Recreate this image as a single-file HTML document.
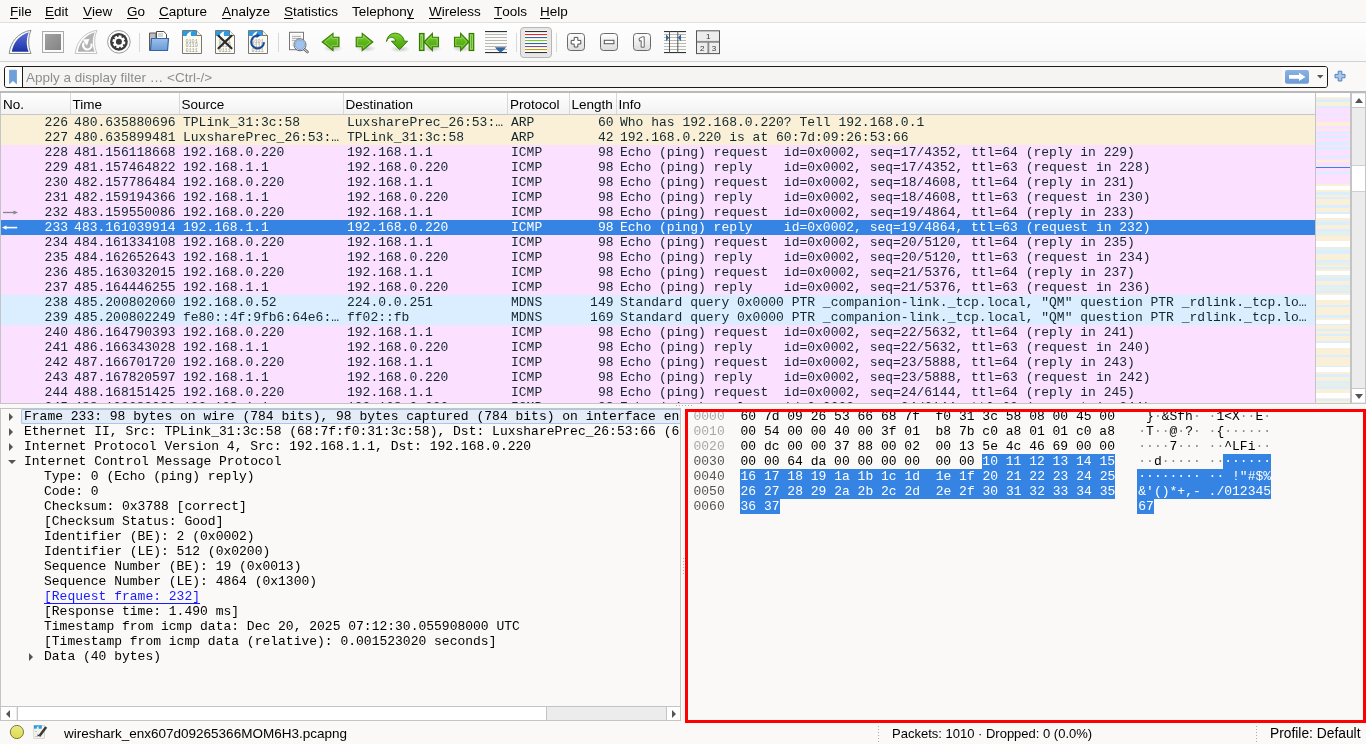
<!DOCTYPE html>
<html><head><meta charset="utf-8"><title>Wireshark</title>
<style>
*{margin:0;padding:0;box-sizing:border-box}
html,body{width:1366px;height:744px;overflow:hidden}
body{will-change:transform;position:relative;background:#faf9f8;font-family:"Liberation Sans",sans-serif;font-size:13.5px;color:#000}
.a{position:absolute}
/* menubar */
#menubar{left:0;top:0;width:1366px;height:22px;background:#f9f8f7}
#menubar span{position:absolute;top:4px;line-height:16px;white-space:nowrap;color:#000}
#menubar u{text-decoration:none;border-bottom:1px solid #000;display:inline-block;line-height:13px}
#mline{left:0;top:22px;width:1366px;height:1px;background:#e0dfde}
/* toolbar */
#toolbar{left:0;top:23px;width:1366px;height:38px;background:linear-gradient(#fefefe,#f8f8f8)}
#tline{left:0;top:61px;width:1366px;height:1px;background:#d2d1d0}
.sep{position:absolute;top:31px;width:1px;height:22px;background:#d8d7d6}
/* filter */
#filter{left:4px;top:66px;width:1324px;height:22px;border:1px solid #1b1b1b;border-radius:3px;background:#f5f4f3;overflow:hidden}
#fbm{left:0;top:0;width:18px;height:20px;background:#fff;border-right:1px solid #1b1b1b}
#fph{left:21px;top:2.5px;line-height:16px;color:#8b8e8f;white-space:nowrap}
/* packet list */
#plist{left:0;top:91px;width:1316px;height:313px;background:#fff;overflow:hidden;border-left:1px solid #c4c4c4;border-top:2px solid #c4c4c4}
#phdr{left:1px;top:93px;width:1315px;height:22px;background:linear-gradient(#fff,#f2f2f2);border-bottom:1px solid #c8c8c8}
.hs{position:absolute;top:93px;width:1px;height:21px;background:#d8d8d8}
.ht{position:absolute;top:97px;line-height:16px;white-space:nowrap;color:#000}
.pr{position:absolute;left:-1px;width:1316px;height:15px;color:#12272e;font-family:"Liberation Mono",monospace;font-size:13px;line-height:15px}
.pr .c{position:absolute;top:0;white-space:pre}
.pr.arp{background:#faf0d7}
.pr.icmp{background:#fce0ff}
.pr.udp{background:#daeeff}
.pr.sel{background:#3584e4;color:#fff}
#pclip{left:1px;top:115px;width:1314px;height:288px;overflow:hidden}
#ptop{left:0;top:91px;width:1366px;height:2px;background:#bababa}
#pbottom{left:0;top:403px;width:1366px;height:1px;background:#c4c4c4}
.vdots{position:absolute;height:1px;background:repeating-linear-gradient(to right,#b0b0b0 0 1px,transparent 1px 3px)}
/* minimap + scrollbar */
#mmap{left:1315px;top:93px;width:37px;height:310px;border-left:1px solid #c4c4c4;border-right:2px solid #c4c4c4;background:linear-gradient(to bottom,#ffffff -0.3px 4.0px,#faf0d7 4.0px 5.8px,#daeeff 5.8px 9.0px,#faf0d7 9.0px 13.0px,#daeeff 13.0px 15.0px,#fce0ff 15.0px 21.2px,#daeeff 21.2px 22.3px,#fce0ff 22.3px 28.7px,#faf0d7 28.7px 33.0px,#fce0ff 33.0px 36.0px,#faf0d7 36.0px 37.3px,#fce0ff 37.3px 39.3px,#daeeff 39.3px 41.0px,#fce0ff 41.0px 43.2px,#daeeff 43.2px 44.8px,#fce0ff 44.8px 49.2px,#daeeff 49.2px 51.8px,#fce0ff 51.8px 54.0px,#daeeff 54.0px 56.7px,#fce0ff 56.7px 63.1px,#daeeff 63.1px 65.3px,#fce0ff 65.3px 67.0px,#faf0d7 67.0px 69.0px,#fce0ff 69.0px 73.6px,#3584e4 73.6px 74.7px,#fce0ff 74.7px 79.0px,#daeeff 79.0px 81.1px,#fce0ff 81.1px 90.8px,#faf0d7 90.8px 93.0px,#ffffff 93.0px 97.3px,#faf0d7 97.3px 98.9px,#daeeff 98.9px 102.1px,#faf0d7 102.1px 104.0px,#daeeff 104.0px 105.9px,#faf0d7 105.9px 112.0px,#daeeff 112.0px 114.8px,#faf0d7 114.8px 118.8px,#daeeff 118.8px 120.9px,#ffffff 120.9px 125.2px,#faf0d7 125.2px 127.4px,#e6efe9 127.4px 129.5px,#daeeff 129.5px 131.7px,#faf0d7 131.7px 136.5px,#daeeff 136.5px 138.7px,#e6efe9 138.7px 143.5px,#faf0d7 143.5px 147.8px,#ffffff 147.8px 153.6px,#e6efe9 153.6px 156.8px,#daeeff 156.8px 161.1px,#faf0d7 161.1px 167.0px,#daeeff 167.0px 169.2px,#e6efe9 169.2px 172.4px,#faf0d7 172.4px 174.0px,#daeeff 174.0px 176.2px,#faf0d7 176.2px 177.8px,#ffffff 177.8px 182.1px,#e6efe9 182.1px 184.8px,#daeeff 184.8px 188.0px,#faf0d7 188.0px 191.8px,#daeeff 191.8px 194.5px,#e6efe9 194.5px 197.7px,#daeeff 197.7px 199.8px,#faf0d7 199.8px 202.0px,#ffffff 202.0px 206.8px,#faf0d7 206.8px 212.2px,#daeeff 212.2px 213.8px,#faf0d7 213.8px 221.9px,#daeeff 221.9px 225.1px,#faf0d7 225.1px 226.7px,#ffffff 226.7px 231.0px,#daeeff 231.0px 232.0px,#faf0d7 232.0px 235.8px,#daeeff 235.8px 237.9px,#faf0d7 237.9px 241.1px,#daeeff 241.1px 243.3px,#faf0d7 243.3px 248.1px,#daeeff 248.1px 250.3px,#ffffff 250.3px 255.1px,#faf0d7 255.1px 261.6px,#daeeff 261.6px 264.3px,#faf0d7 264.3px 272.9px,#daeeff 272.9px 274.5px,#ffffff 274.5px 279.3px,#faf0d7 279.3px 280.9px,#daeeff 280.9px 284.2px,#faf0d7 284.2px 288.0px,#daeeff 288.0px 290.0px,#e6efe9 290.0px 294.4px,#daeeff 294.4px 296.5px,#faf0d7 296.5px 299.7px,#ffffff 299.7px 304.6px,#faf0d7 304.6px 306.2px,#daeeff 306.2px 307.8px,#faf0d7 307.8px 310.0px)}
#vscroll{left:1352px;top:93px;width:14px;height:310px;background:#ececec;border-right:1.5px solid #c4c4c4}
.sbtn{position:absolute;background:#fff}
.up{width:0;height:0;border-left:4.5px solid transparent;border-right:4.5px solid transparent;border-bottom:5px solid #555;position:absolute}
.dn{width:0;height:0;border-left:4.5px solid transparent;border-right:4.5px solid transparent;border-top:5px solid #555;position:absolute}
.lf{width:0;height:0;border-top:4px solid transparent;border-bottom:4px solid transparent;border-right:4.5px solid #555;position:absolute}
.rt{width:0;height:0;border-top:4px solid transparent;border-bottom:4px solid transparent;border-left:4.5px solid #555;position:absolute}
/* details */
#details{left:0;top:408px;width:681px;height:313px;background:#faf9f8;border:1px solid #c4c4c4;border-right:1px solid #c4c4c4;overflow:hidden}
.t{position:absolute;font-family:"Liberation Mono",monospace;font-size:13px;line-height:15px;white-space:pre;color:#000}
.t.link{color:#1a1aff;text-decoration:underline;text-decoration-skip-ink:none;text-underline-offset:2.5px}
.hl{position:absolute;left:20px;width:662px;height:15px;border-radius:2px;background:#e3ecf7;border:1px solid #a9c7ea;border-right:none}
.tri-r{position:absolute;width:0;height:0;border-top:4px solid transparent;border-bottom:4px solid transparent;border-left:4px solid #555}
.tri-d{position:absolute;width:0;height:0;border-left:4px solid transparent;border-right:4px solid transparent;border-top:4px solid #555}
#dclip{left:1px;top:409px;width:679px;height:297px;overflow:hidden}
#hscroll{left:1px;top:706px;width:679px;height:14px;background:#ececec;border-top:1px solid #c4c4c4}
/* hex */
#hex{left:685px;top:409px;width:681px;height:314px;background:#faf9f8;overflow:hidden}
#redbox{left:685px;top:409px;width:681px;height:314px;border:3px solid #ff0000}
.hx{position:absolute;font-family:"Liberation Mono",monospace;font-size:13px;line-height:15px;white-space:pre;color:#000}
.off1{color:#a8a8a8}
.off2{color:#555}
.hsel{position:absolute;background:#3584e4;height:15px}
.dot{color:#888}
.w{color:#fff}
/* status */
#status{left:0;top:723px;width:1366px;height:21px;background:#faf9f8}
.st{position:absolute;top:2px;line-height:17px;white-space:nowrap;color:#000}
.sdots{position:absolute;top:3px;width:1px;height:18px;background:repeating-linear-gradient(#aaa 0 1px,transparent 1px 3px)}

</style></head><body>
<div id="menubar" class="a">
<span style="left:10px"><u>F</u>ile</span>
<span style="left:45px"><u>E</u>dit</span>
<span style="left:83px"><u>V</u>iew</span>
<span style="left:127px"><u>G</u>o</span>
<span style="left:159px"><u>C</u>apture</span>
<span style="left:222px"><u>A</u>nalyze</span>
<span style="left:284px"><u>S</u>tatistics</span>
<span style="left:352px">Telephon<u>y</u></span>
<span style="left:429px"><u>W</u>ireless</span>
<span style="left:494px"><u>T</u>ools</span>
<span style="left:540px"><u>H</u>elp</span>
</div>
<div id="mline" class="a"></div>
<div id="toolbar" class="a"></div>
<div id="tline" class="a"></div>
<svg class="a" style="left:0;top:0" width="740" height="62" viewBox="0 0 740 62">
<defs>
<linearGradient id="gfin" x1="0" y1="0" x2="0" y2="1"><stop offset="0" stop-color="#5a70d8"/><stop offset="1" stop-color="#1c33a6"/></linearGradient>
<linearGradient id="ggrey" x1="0" y1="0" x2="1" y2="1"><stop offset="0" stop-color="#a2a2a2"/><stop offset="1" stop-color="#838383"/></linearGradient>
<linearGradient id="ggreen" x1="0" y1="0" x2="0" y2="1"><stop offset="0" stop-color="#7fd23a"/><stop offset=".5" stop-color="#5cb51a"/><stop offset="1" stop-color="#4aa20a"/></linearGradient>
<linearGradient id="gbtn" x1="0" y1="0" x2="0" y2="1"><stop offset="0" stop-color="#ffffff"/><stop offset="1" stop-color="#dcdcdc"/></linearGradient>
<linearGradient id="gfold" x1="0" y1="0" x2="0" y2="1"><stop offset="0" stop-color="#9cc0ea"/><stop offset="1" stop-color="#6a9ad6"/></linearGradient>
<radialGradient id="gshadow"><stop offset="0" stop-color="#000" stop-opacity=".22"/><stop offset="1" stop-color="#000" stop-opacity="0"/></radialGradient>

</defs>
<!-- start capture fin -->
<path d="M9.2,53.5 C10.5,42 18,32.3 31,30.3 C28,37 27.8,46 31,53.5 Z" fill="#fff" stroke="#8a8a8a" stroke-width="1"/>
<path d="M11.8,51.8 C13.2,42.5 19.5,35 28.8,32.2 C26.3,38.5 26,45.5 28.7,51.8 Z" fill="url(#gfin)"/>
<!-- stop -->
<rect x="42.5" y="31.5" width="21" height="21" fill="#fafafa" stroke="#ababab" stroke-width="1"/>
<rect x="45" y="34" width="16" height="16" fill="url(#ggrey)"/>
<!-- restart fin -->
<path d="M75.2,53.5 C76.5,42 84,32.3 97,30.3 C94,37 93.8,46 97,53.5 Z" fill="#fff" stroke="#c4c4c4" stroke-width="1"/>
<path d="M77.8,51.8 C79.2,42.5 85.5,35 94.8,32.2 C92.3,38.5 92,45.5 94.7,51.8 Z" fill="#b3b3b3"/>
<path d="M84,42.6 A4.2,4.2 0 1 0 91.2,43.6" fill="none" stroke="#fff" stroke-width="2"/>
<path d="M82.8,39.6 L89.3,38.9 L86.9,45.8 Z" fill="#fff"/>
<!-- options gear -->
<circle cx="118.9" cy="41.8" r="11.3" fill="#fff" stroke="#9a9a9a" stroke-width="1"/>
<circle cx="118.9" cy="41.8" r="8.9" fill="#3a3a3a"/>
<g transform="translate(118.9,41.8) rotate(12)" fill="#fff">
 <circle r="5.1"/>
 <rect x="-1.4" y="-6.4" width="2.8" height="12.8"/>
 <rect x="-1.4" y="-6.4" width="2.8" height="12.8" transform="rotate(45)"/>
 <rect x="-1.4" y="-6.4" width="2.8" height="12.8" transform="rotate(90)"/>
 <rect x="-1.4" y="-6.4" width="2.8" height="12.8" transform="rotate(135)"/>
</g>
<circle cx="118.9" cy="41.8" r="3" fill="#3a3a3a"/>
<!-- sep -->
<rect x="139" y="33" width="1" height="19" fill="#d9d8d7"/>
<!-- open folder -->
<path d="M149.5,50.5 V33 H156 V50.5 Z" fill="#bcbcbc" stroke="#5a5a5a" stroke-width="1"/>
<path d="M156.5,38.5 V31.5 H163.8 L166.5,34.2 V38.5" fill="#fff" stroke="#4a4a4a" stroke-width="1"/>
<rect x="158" y="33.6" width="5" height="0.8" fill="#9a9a9a"/><rect x="158" y="35.6" width="5" height="0.8" fill="#9a9a9a"/>
<path d="M150.5,50.5 L151.5,38.5 H168.5 L167.5,50.5 Z" fill="url(#gfold)" stroke="#3465a4" stroke-width="1.2"/>
<!-- docs -->
<g>
 <path d="M182.5,30.5 H196.5 L201.5,35.5 V53.5 H182.5 Z" fill="#fbfbee" stroke="#777" stroke-width="1"/>
 <path d="M183,31 H196 L199.5,34.5 V36 H183 Z" fill="#2a9be6"/>
 <path d="M186.5,36 C187,33.5 189,32 191.5,31.2 C190.5,33 190.6,34.5 191.2,36 Z" fill="#fff"/>
 <path d="M196.5,30.5 V35.5 H201.5" fill="#f2f2e8" stroke="#777" stroke-width="1"/>
 <g fill="#9a9a9a" font-family="Liberation Mono" font-size="5.2">
  <text x="185.4" y="42.6">0101</text><text x="185.4" y="47">0110</text><text x="185.4" y="51.6">0111</text>
 </g>
</g>
<g transform="translate(33,0)">
 <path d="M182.5,30.5 H196.5 L201.5,35.5 V53.5 H182.5 Z" fill="#fbfbee" stroke="#777" stroke-width="1"/>
 <path d="M183,31 H196 L199.5,34.5 V36 H183 Z" fill="#2a9be6"/>
 <path d="M186.5,36 C187,33.5 189,32 191.5,31.2 C190.5,33 190.6,34.5 191.2,36 Z" fill="#fff"/>
 <path d="M196.5,30.5 V35.5 H201.5" fill="#f2f2e8" stroke="#777" stroke-width="1"/>
 <g fill="#9a9a9a" font-family="Liberation Mono" font-size="5.2">
  <text x="185.4" y="42.6">0101</text><text x="185.4" y="47">0110</text><text x="185.4" y="51.6">0111</text>
 </g>
</g>
<g transform="translate(66,0)">
 <path d="M182.5,30.5 H196.5 L201.5,35.5 V53.5 H182.5 Z" fill="#fbfbee" stroke="#777" stroke-width="1"/>
 <path d="M183,31 H196 L199.5,34.5 V36 H183 Z" fill="#2a9be6"/>
 <path d="M186.5,36 C187,33.5 189,32 191.5,31.2 C190.5,33 190.6,34.5 191.2,36 Z" fill="#fff"/>
 <path d="M196.5,30.5 V35.5 H201.5" fill="#f2f2e8" stroke="#777" stroke-width="1"/>
 <g fill="#9a9a9a" font-family="Liberation Mono" font-size="5.2">
  <text x="185.4" y="42.6">0101</text><text x="185.4" y="47">0110</text><text x="185.4" y="51.6">0111</text>
 </g>
</g>
<path d="M218.5,35.8 L231.5,48.3 M231.5,35.8 L218.5,48.3" stroke="#2a2a2a" stroke-width="2.2" stroke-linecap="round"/>
<path d="M264,42.3 A6.4,6.4 0 1 1 257.2,35.6" fill="none" stroke="#1e4a9a" stroke-width="2.1"/>
<path d="M256.5,33.2 L260.6,35.5 L256.5,38 Z" fill="#1e4a9a"/>
<!-- sep -->
<rect x="278" y="33" width="1" height="19" fill="#d9d8d7"/>
<!-- find -->
<rect x="289.5" y="32.3" width="14" height="17.4" fill="#fff" stroke="#777" stroke-width="1"/>
<rect x="291.5" y="34.5" width="10" height="12" fill="#efefef"/>
<rect x="292" y="36" width="9" height="0.8" fill="#aaa"/><rect x="292" y="38" width="9" height="0.8" fill="#aaa"/><rect x="292" y="40" width="6" height="0.8" fill="#aaa"/>
<path d="M303.5,48.5 L307.5,52" stroke="#666" stroke-width="2.6" stroke-linecap="round"/>
<path d="M303.5,48.5 L307.5,52" stroke="#eee" stroke-width="1" stroke-linecap="round"/>
<circle cx="300" cy="44.8" r="6" fill="#fff" stroke="#666" stroke-width="1"/>
<circle cx="300" cy="44.8" r="4.8" fill="#9fc3ec" stroke="#6aa0da" stroke-width="0.8"/>
<!-- shadows for arrows -->
<ellipse cx="333" cy="48.5" rx="10" ry="3.5" fill="url(#gshadow)"/>
<ellipse cx="366" cy="48.5" rx="10" ry="3.5" fill="url(#gshadow)"/>
<ellipse cx="400" cy="49" rx="10" ry="3.5" fill="url(#gshadow)"/>
<ellipse cx="432" cy="48.5" rx="10" ry="3.5" fill="url(#gshadow)"/>
<ellipse cx="462" cy="48.5" rx="10" ry="3.5" fill="url(#gshadow)"/>
<!-- prev -->
<path d="M322.2,42 L333,33.4 V37.2 H339 V46.8 H333 V50.6 Z" fill="url(#ggreen)" stroke="#3a7d00" stroke-width="1.1" stroke-linejoin="miter"/>
<path d="M324.6,42 L332,36 V38.5 H337.5 V45.5 H332 V48 Z" fill="none" stroke="#b5e68a" stroke-width="0.6" opacity=".8"/>
<!-- next -->
<path d="M372.8,42 L362.2,33.4 V37.2 H356.2 V46.8 H362.2 V50.6 Z" fill="url(#ggreen)" stroke="#3a7d00" stroke-width="1.1"/>
<path d="M370.4,42 L363.2,36 V38.5 H357.7 V45.5 H363.2 V48 Z" fill="none" stroke="#b5e68a" stroke-width="0.6" opacity=".8"/>
<!-- go to packet (curved) -->
<path d="M386.5,41.5 C387.5,35 392,33 395.5,33.2 C400,33.4 403.5,36.5 404.2,41.2 H407.6 L399.5,49.6 L391.4,41.2 H395.8 C395,38 392,36.5 389.5,37.8 C388,38.6 387,40 386.5,41.5 Z" fill="url(#ggreen)" stroke="#3a7d00" stroke-width="1"/>
<!-- first -->
<rect x="419.5" y="33.5" width="4.5" height="17" fill="#5cb21c" stroke="#347a00" stroke-width="1.2"/><rect x="420.9" y="34.9" width="1.7" height="14.2" fill="none" stroke="#b6e68e" stroke-width="0.7"/>
<path d="M424,42 L432.4,33.4 V37.2 H438.5 V46.8 H432.4 V50.6 Z" fill="url(#ggreen)" stroke="#3a7d00" stroke-width="1.1"/><path d="M426.2,42 L431.2,36.6 V38.5 H437.2 V45.5 H431.2 V47.4 Z" fill="none" stroke="#b5e68a" stroke-width="0.6" opacity=".8"/>
<!-- last -->
<rect x="469.2" y="33.5" width="4.5" height="17" fill="#5cb21c" stroke="#347a00" stroke-width="1.2"/><rect x="470.6" y="34.9" width="1.7" height="14.2" fill="none" stroke="#b6e68e" stroke-width="0.7"/>
<path d="M469,42 L460.6,33.4 V37.2 H454.5 V46.8 H460.6 V50.6 Z" fill="url(#ggreen)" stroke="#3a7d00" stroke-width="1.1"/><path d="M466.8,42 L461.8,36.6 V38.5 H455.8 V45.5 H461.8 V47.4 Z" fill="none" stroke="#b5e68a" stroke-width="0.6" opacity=".8"/>
<!-- autoscroll -->
<rect x="485" y="31" width="22" height="22" fill="#fbfbfb"/>
<g fill="#b9b9b0"><rect x="485" y="34" width="22" height="1"/><rect x="485" y="37" width="22" height="1"/><rect x="485" y="40" width="22" height="1"/><rect x="485" y="43" width="22" height="1"/><rect x="485" y="46" width="22" height="1"/><rect x="485" y="49" width="22" height="1"/></g>
<rect x="485" y="31" width="22" height="1.1" fill="#2e3436"/><rect x="485" y="52" width="22" height="1.1" fill="#2e3436"/>
<path d="M495,47.3 H506 C505,49 503,51 500.5,52.8 C498,51 496,49 495,47.3 Z" fill="#3465a4"/>
<!-- sep -->
<rect x="516" y="33" width="1" height="19" fill="#d9d8d7"/>
<!-- colorize (toggled) -->
<rect x="520.5" y="27.5" width="31" height="30" rx="3.5" fill="#e8e7e6" stroke="#b6b5b4" stroke-width="1"/>
<rect x="525" y="30.5" width="22" height="23" fill="#fff"/>
<rect x="525" y="31" width="22" height="1.1" fill="#2e3436"/>
<rect x="525" y="34" width="22" height="1.1" fill="#ef2929"/>
<rect x="525" y="37" width="22" height="1.1" fill="#3465a4"/>
<rect x="525" y="40" width="22" height="1.1" fill="#73d216"/>
<rect x="525" y="43" width="22" height="1.1" fill="#3465a4"/>
<rect x="525" y="46" width="22" height="1.1" fill="#75507b"/>
<rect x="525" y="49" width="22" height="1.1" fill="#c4a000"/>
<rect x="525" y="52" width="22" height="1.1" fill="#2e3436"/>
<!-- sep -->
<rect x="556" y="33" width="1" height="19" fill="#d9d8d7"/>
<!-- zoom in -->
<rect x="567.5" y="33.5" width="17" height="17" rx="3" fill="url(#gbtn)" stroke="#6a6a6a" stroke-width="1"/>
<path d="M574.2,37.4 H577.8 V40.4 H580.8 V44 H577.8 V47 H574.2 V44 H571.2 V40.4 H574.2 Z" fill="#fff" stroke="#555" stroke-width="1"/>
<!-- zoom out -->
<rect x="600.5" y="33.5" width="17" height="17" rx="3" fill="url(#gbtn)" stroke="#6a6a6a" stroke-width="1"/>
<rect x="604.3" y="40.3" width="9.6" height="3.4" fill="#fff" stroke="#555" stroke-width="1"/>
<!-- normal size -->
<rect x="633.5" y="33.5" width="17" height="17" rx="3" fill="url(#gbtn)" stroke="#6a6a6a" stroke-width="1"/>
<path d="M639,38.5 L642.5,36.8 H644.2 V47.2 H641.2 V40.6 L639.5,41.2 Z" fill="#fff" stroke="#555" stroke-width="0.9"/>
<!-- resize columns -->
<rect x="664" y="31" width="22" height="21.5" fill="#fbfbfb"/>
<g fill="#b9b9b0"><rect x="664" y="34" width="22" height="1"/><rect x="664" y="37" width="22" height="1"/><rect x="664" y="40" width="22" height="1"/><rect x="664" y="43" width="22" height="1"/><rect x="664" y="46" width="22" height="1"/><rect x="664" y="49" width="22" height="1"/></g>
<rect x="664" y="31" width="22" height="1.1" fill="#2e3436"/><rect x="664" y="52" width="22" height="1.1" fill="#2e3436"/>
<rect x="669" y="31" width="1" height="22" fill="#555"/><rect x="677.3" y="31" width="1" height="22" fill="#555"/>
<path d="M666,34.3 L669.2,37.8 L666,41.3 Z" fill="#3465a4"/>
<path d="M681,34.3 L677.8,37.8 L681,41.3 Z" fill="#3465a4"/>
<!-- layout -->
<rect x="696.5" y="30.8" width="23" height="22.8" fill="#ededed" stroke="#555" stroke-width="1"/>
<rect x="697" y="40.9" width="22" height="1.9" fill="#8e8e8e"/>
<rect x="707.4" y="42" width="1.9" height="11" fill="#8e8e8e"/>
<g font-family="Liberation Sans" font-size="8" fill="#333" text-anchor="middle"><text x="708.2" y="39.3">1</text><text x="702.3" y="50.8">2</text><text x="714" y="50.8">3</text></g>
</svg>


<div id="filter" class="a">
 <div id="fbm" class="a"></div>
 <div id="fph" class="a">Apply a display filter … &lt;Ctrl-/&gt;</div>
 <div class="a" style="left:1277px;top:0;width:45px;height:20px;background:#faf9f8"></div>
</div>
<svg class="a" style="left:0;top:62px" width="1366" height="30">
 <path d="M9.5,8.2 H16.5 V21.8 L13,18.6 L9.5,21.8 Z" fill="#6f9fd8" stroke="#5d8fcc" stroke-width="0.6"/>
 <defs><linearGradient id="gapp" x1="0" y1="0" x2="0" y2="1"><stop offset="0" stop-color="#8ab2e2"/><stop offset="1" stop-color="#6b9ad5"/></linearGradient></defs>
 <rect x="1285" y="8" width="24" height="13.8" rx="2.2" fill="url(#gapp)"/>
 <path d="M1289,13 H1299 V10.8 L1305.5,14.9 L1299,19 V16.8 H1289 Z" fill="#fff"/>
 <path d="M1317,13 H1323.4 L1320.2,16.4 Z" fill="#555"/>
 <path d="M1338.2,9.2 H1341.8 V12.4 H1345 V15.8 H1341.8 V19 H1338.2 V15.8 H1335 V12.4 H1338.2 Z" fill="#a8c6ea" stroke="#4f82c2" stroke-width="1"/>
</svg>

<div id="plist" class="a"></div>
<div id="pclip" class="a">
<div class="pr arp" style="top:0px"><span class="c" style="right:1248px">226</span><span class="c" style="left:74.1px">480.635880696</span><span class="c" style="left:183px">TPLink_31:3c:58</span><span class="c" style="left:347px">LuxsharePrec_26:53:…</span><span class="c" style="left:511px">ARP</span><span class="c" style="right:702.5px">60</span><span class="c" style="left:620px">Who has 192.168.0.220? Tell 192.168.0.1</span></div>
<div class="pr arp" style="top:15px"><span class="c" style="right:1248px">227</span><span class="c" style="left:74.1px">480.635899481</span><span class="c" style="left:183px">LuxsharePrec_26:53:…</span><span class="c" style="left:347px">TPLink_31:3c:58</span><span class="c" style="left:511px">ARP</span><span class="c" style="right:702.5px">42</span><span class="c" style="left:620px">192.168.0.220 is at 60:7d:09:26:53:66</span></div>
<div class="pr icmp" style="top:30px"><span class="c" style="right:1248px">228</span><span class="c" style="left:74.1px">481.156118668</span><span class="c" style="left:183px">192.168.0.220</span><span class="c" style="left:347px">192.168.1.1</span><span class="c" style="left:511px">ICMP</span><span class="c" style="right:702.5px">98</span><span class="c" style="left:620px">Echo (ping) request  id=0x0002, seq=17/4352, ttl=64 (reply in 229)</span></div>
<div class="pr icmp" style="top:45px"><span class="c" style="right:1248px">229</span><span class="c" style="left:74.1px">481.157464822</span><span class="c" style="left:183px">192.168.1.1</span><span class="c" style="left:347px">192.168.0.220</span><span class="c" style="left:511px">ICMP</span><span class="c" style="right:702.5px">98</span><span class="c" style="left:620px">Echo (ping) reply    id=0x0002, seq=17/4352, ttl=63 (request in 228)</span></div>
<div class="pr icmp" style="top:60px"><span class="c" style="right:1248px">230</span><span class="c" style="left:74.1px">482.157786484</span><span class="c" style="left:183px">192.168.0.220</span><span class="c" style="left:347px">192.168.1.1</span><span class="c" style="left:511px">ICMP</span><span class="c" style="right:702.5px">98</span><span class="c" style="left:620px">Echo (ping) request  id=0x0002, seq=18/4608, ttl=64 (reply in 231)</span></div>
<div class="pr icmp" style="top:75px"><span class="c" style="right:1248px">231</span><span class="c" style="left:74.1px">482.159194366</span><span class="c" style="left:183px">192.168.1.1</span><span class="c" style="left:347px">192.168.0.220</span><span class="c" style="left:511px">ICMP</span><span class="c" style="right:702.5px">98</span><span class="c" style="left:620px">Echo (ping) reply    id=0x0002, seq=18/4608, ttl=63 (request in 230)</span></div>
<div class="pr icmp" style="top:90px"><svg class="a" style="left:0;top:0" width="22" height="15"><path d="M3,7.5 H14.5" stroke="#808a8c" stroke-width="1.3"/><path d="M13.5,5.6 L18,7.5 L13.5,9.4 Z" fill="#808a8c"/></svg><span class="c" style="right:1248px">232</span><span class="c" style="left:74.1px">483.159550086</span><span class="c" style="left:183px">192.168.0.220</span><span class="c" style="left:347px">192.168.1.1</span><span class="c" style="left:511px">ICMP</span><span class="c" style="right:702.5px">98</span><span class="c" style="left:620px">Echo (ping) request  id=0x0002, seq=19/4864, ttl=64 (reply in 233)</span></div>
<div class="pr sel" style="top:105px"><svg class="a" style="left:0;top:0" width="22" height="15"><path d="M5,7.6 H17.2" stroke="#fff" stroke-width="1.6"/><path d="M6.5,5.4 L2,7.6 L6.5,9.8 Z" fill="#fff"/></svg><span class="c" style="right:1248px">233</span><span class="c" style="left:74.1px">483.161039914</span><span class="c" style="left:183px">192.168.1.1</span><span class="c" style="left:347px">192.168.0.220</span><span class="c" style="left:511px">ICMP</span><span class="c" style="right:702.5px">98</span><span class="c" style="left:620px">Echo (ping) reply    id=0x0002, seq=19/4864, ttl=63 (request in 232)</span></div>
<div class="pr icmp" style="top:120px"><span class="c" style="right:1248px">234</span><span class="c" style="left:74.1px">484.161334108</span><span class="c" style="left:183px">192.168.0.220</span><span class="c" style="left:347px">192.168.1.1</span><span class="c" style="left:511px">ICMP</span><span class="c" style="right:702.5px">98</span><span class="c" style="left:620px">Echo (ping) request  id=0x0002, seq=20/5120, ttl=64 (reply in 235)</span></div>
<div class="pr icmp" style="top:135px"><span class="c" style="right:1248px">235</span><span class="c" style="left:74.1px">484.162652643</span><span class="c" style="left:183px">192.168.1.1</span><span class="c" style="left:347px">192.168.0.220</span><span class="c" style="left:511px">ICMP</span><span class="c" style="right:702.5px">98</span><span class="c" style="left:620px">Echo (ping) reply    id=0x0002, seq=20/5120, ttl=63 (request in 234)</span></div>
<div class="pr icmp" style="top:150px"><span class="c" style="right:1248px">236</span><span class="c" style="left:74.1px">485.163032015</span><span class="c" style="left:183px">192.168.0.220</span><span class="c" style="left:347px">192.168.1.1</span><span class="c" style="left:511px">ICMP</span><span class="c" style="right:702.5px">98</span><span class="c" style="left:620px">Echo (ping) request  id=0x0002, seq=21/5376, ttl=64 (reply in 237)</span></div>
<div class="pr icmp" style="top:165px"><span class="c" style="right:1248px">237</span><span class="c" style="left:74.1px">485.164446255</span><span class="c" style="left:183px">192.168.1.1</span><span class="c" style="left:347px">192.168.0.220</span><span class="c" style="left:511px">ICMP</span><span class="c" style="right:702.5px">98</span><span class="c" style="left:620px">Echo (ping) reply    id=0x0002, seq=21/5376, ttl=63 (request in 236)</span></div>
<div class="pr udp" style="top:180px"><span class="c" style="right:1248px">238</span><span class="c" style="left:74.1px">485.200802060</span><span class="c" style="left:183px">192.168.0.52</span><span class="c" style="left:347px">224.0.0.251</span><span class="c" style="left:511px">MDNS</span><span class="c" style="right:702.5px">149</span><span class="c" style="left:620px">Standard query 0x0000 PTR _companion-link._tcp.local, &quot;QM&quot; question PTR _rdlink._tcp.lo…</span></div>
<div class="pr udp" style="top:195px"><span class="c" style="right:1248px">239</span><span class="c" style="left:74.1px">485.200802249</span><span class="c" style="left:183px">fe80::4f:9fb6:64e6:…</span><span class="c" style="left:347px">ff02::fb</span><span class="c" style="left:511px">MDNS</span><span class="c" style="right:702.5px">169</span><span class="c" style="left:620px">Standard query 0x0000 PTR _companion-link._tcp.local, &quot;QM&quot; question PTR _rdlink._tcp.lo…</span></div>
<div class="pr icmp" style="top:210px"><span class="c" style="right:1248px">240</span><span class="c" style="left:74.1px">486.164790393</span><span class="c" style="left:183px">192.168.0.220</span><span class="c" style="left:347px">192.168.1.1</span><span class="c" style="left:511px">ICMP</span><span class="c" style="right:702.5px">98</span><span class="c" style="left:620px">Echo (ping) request  id=0x0002, seq=22/5632, ttl=64 (reply in 241)</span></div>
<div class="pr icmp" style="top:225px"><span class="c" style="right:1248px">241</span><span class="c" style="left:74.1px">486.166343028</span><span class="c" style="left:183px">192.168.1.1</span><span class="c" style="left:347px">192.168.0.220</span><span class="c" style="left:511px">ICMP</span><span class="c" style="right:702.5px">98</span><span class="c" style="left:620px">Echo (ping) reply    id=0x0002, seq=22/5632, ttl=63 (request in 240)</span></div>
<div class="pr icmp" style="top:240px"><span class="c" style="right:1248px">242</span><span class="c" style="left:74.1px">487.166701720</span><span class="c" style="left:183px">192.168.0.220</span><span class="c" style="left:347px">192.168.1.1</span><span class="c" style="left:511px">ICMP</span><span class="c" style="right:702.5px">98</span><span class="c" style="left:620px">Echo (ping) request  id=0x0002, seq=23/5888, ttl=64 (reply in 243)</span></div>
<div class="pr icmp" style="top:255px"><span class="c" style="right:1248px">243</span><span class="c" style="left:74.1px">487.167820597</span><span class="c" style="left:183px">192.168.1.1</span><span class="c" style="left:347px">192.168.0.220</span><span class="c" style="left:511px">ICMP</span><span class="c" style="right:702.5px">98</span><span class="c" style="left:620px">Echo (ping) reply    id=0x0002, seq=23/5888, ttl=63 (request in 242)</span></div>
<div class="pr icmp" style="top:270px"><span class="c" style="right:1248px">244</span><span class="c" style="left:74.1px">488.168151425</span><span class="c" style="left:183px">192.168.0.220</span><span class="c" style="left:347px">192.168.1.1</span><span class="c" style="left:511px">ICMP</span><span class="c" style="right:702.5px">98</span><span class="c" style="left:620px">Echo (ping) request  id=0x0002, seq=24/6144, ttl=64 (reply in 245)</span></div>
<div class="pr icmp" style="top:285px"><span class="c" style="right:1248px">245</span><span class="c" style="left:74.1px">488.169683080</span><span class="c" style="left:183px">192.168.1.1</span><span class="c" style="left:347px">192.168.0.220</span><span class="c" style="left:511px">ICMP</span><span class="c" style="right:702.5px">98</span><span class="c" style="left:620px">Echo (ping) reply    id=0x0002, seq=24/6144, ttl=63 (request in 244)</span></div>
</div>
<div id="phdr" class="a"></div>
<div class="hs" style="left:70px"></div>
<div class="hs" style="left:179px"></div>
<div class="hs" style="left:343px"></div>
<div class="hs" style="left:507px"></div>
<div class="hs" style="left:569px"></div>
<div class="hs" style="left:616px"></div>
<div class="ht" style="left:3px">No.</div>
<div class="ht" style="left:72.5px">Time</div>
<div class="ht" style="left:181.5px">Source</div>
<div class="ht" style="left:345.5px">Destination</div>
<div class="ht" style="left:510px">Protocol</div>
<div class="ht" style="left:571.5px">Length</div>
<div class="ht" style="left:618.5px">Info</div>
<div id="pbottom" class="a"></div>
<div id="ptop" class="a"></div>
<div class="vdots" style="left:676px;top:405px;width:17px"></div>
<div class="a" style="left:683px;top:558px;width:1px;height:18px;background:repeating-linear-gradient(#b0b0b0 0 1px,transparent 1px 3px)"></div>
<div id="mmap" class="a"></div>
<div id="vscroll" class="a">
 <div class="sbtn" style="left:0;top:1px;width:12.5px;height:14px;border-bottom:1px solid #c8c8c8"></div>
 <div class="up" style="left:2.5px;top:4.5px"></div>
 <div class="sbtn" style="left:0;top:72px;width:12.5px;height:27px;border-top:1px solid #d0d0d0;border-bottom:1px solid #d0d0d0"></div>
 <div class="sbtn" style="left:0;top:295px;width:12.5px;height:14px;border-top:1px solid #c8c8c8"></div>
 <div class="dn" style="left:2.5px;top:301px"></div>
</div>

<div id="details" class="a"></div>
<div id="dclip" class="a">
<div class="hl" style="top:0px"></div>
<div class="tri-r" style="left:8px;top:4px"></div>
<div class="t" style="left:23px;top:0px">Frame 233: 98 bytes on wire (784 bits), 98 bytes captured (784 bits) on interface enx607d09265366, id 0</div>
<div class="tri-r" style="left:8px;top:19px"></div>
<div class="t" style="left:23px;top:15px">Ethernet II, Src: TPLink_31:3c:58 (68:7f:f0:31:3c:58), Dst: LuxsharePrec_26:53:66 (60:7d:09:26:53:66)</div>
<div class="tri-r" style="left:8px;top:34px"></div>
<div class="t" style="left:23px;top:30px">Internet Protocol Version 4, Src: 192.168.1.1, Dst: 192.168.0.220</div>
<div class="tri-d" style="left:7px;top:51px"></div>
<div class="t" style="left:23px;top:45px">Internet Control Message Protocol</div>
<div class="t" style="left:43px;top:60px">Type: 0 (Echo (ping) reply)</div>
<div class="t" style="left:43px;top:75px">Code: 0</div>
<div class="t" style="left:43px;top:90px">Checksum: 0x3788 [correct]</div>
<div class="t" style="left:43px;top:105px">[Checksum Status: Good]</div>
<div class="t" style="left:43px;top:120px">Identifier (BE): 2 (0x0002)</div>
<div class="t" style="left:43px;top:135px">Identifier (LE): 512 (0x0200)</div>
<div class="t" style="left:43px;top:150px">Sequence Number (BE): 19 (0x0013)</div>
<div class="t" style="left:43px;top:165px">Sequence Number (LE): 4864 (0x1300)</div>
<div class="t link" style="left:43px;top:180px">[Request frame: 232]</div>
<div class="t" style="left:43px;top:195px">[Response time: 1.490 ms]</div>
<div class="t" style="left:43px;top:210px">Timestamp from icmp data: Dec 20, 2025 07:12:30.055908000 UTC</div>
<div class="t" style="left:43px;top:225px">[Timestamp from icmp data (relative): 0.001523020 seconds]</div>
<div class="tri-r" style="left:28px;top:244px"></div>
<div class="t" style="left:43px;top:240px">Data (40 bytes)</div>
</div>
<div id="hscroll" class="a">
 <div class="sbtn" style="left:0;top:0;width:15px;height:13px"></div>
 <div class="lf" style="left:5px;top:3px"></div>
 <div class="sbtn" style="left:16px;top:0;width:530px;height:13px;border-left:1px solid #c4c4c4;border-right:1px solid #c4c4c4"></div>
 <div class="sbtn" style="left:665px;top:0;width:14px;height:13px;border-left:1px solid #c4c4c4"></div>
 <div class="rt" style="left:671px;top:3px"></div>
</div>

<div id="hex" class="a">
<div class="hsel" style="left:296.8px;top:45px;width:133.1px"></div>
<div class="hsel" style="left:538.1px;top:45px;width:47.8px"></div>
<div class="hsel" style="left:55.0px;top:60px;width:374.9px"></div>
<div class="hsel" style="left:452.3px;top:60px;width:133.6px"></div>
<div class="hsel" style="left:55.0px;top:75px;width:374.9px"></div>
<div class="hsel" style="left:452.3px;top:75px;width:133.6px"></div>
<div class="hsel" style="left:55.0px;top:90px;width:39.5px"></div>
<div class="hsel" style="left:452.3px;top:90px;width:16.6px"></div>
<div class="hx off1" style="left:8.5px;top:0px">0000</div>
<div class="hx" style="left:55.5px;top:0px">60 7d 09 26 53 66 68 7f  f0 31 3c 58 08 00 45 00</div>
<div class="hx" style="left:453.3px;top:0px">`}<span class="dot">·</span>&amp;Sfh<span class="dot">·</span> <span class="dot">·</span>1&lt;X<span class="dot">·</span><span class="dot">·</span>E<span class="dot">·</span></div>
<div class="hx off1" style="left:8.5px;top:15px">0010</div>
<div class="hx" style="left:55.5px;top:15px">00 54 00 00 40 00 3f 01  b8 7b c0 a8 01 01 c0 a8</div>
<div class="hx" style="left:453.3px;top:15px"><span class="dot">·</span>T<span class="dot">·</span><span class="dot">·</span>@<span class="dot">·</span>?<span class="dot">·</span> <span class="dot">·</span>{<span class="dot">·</span><span class="dot">·</span><span class="dot">·</span><span class="dot">·</span><span class="dot">·</span><span class="dot">·</span></div>
<div class="hx off1" style="left:8.5px;top:30px">0020</div>
<div class="hx" style="left:55.5px;top:30px">00 dc 00 00 37 88 00 02  00 13 5e 4c 46 69 00 00</div>
<div class="hx" style="left:453.3px;top:30px"><span class="dot">·</span><span class="dot">·</span><span class="dot">·</span><span class="dot">·</span>7<span class="dot">·</span><span class="dot">·</span><span class="dot">·</span> <span class="dot">·</span><span class="dot">·</span>^LFi<span class="dot">·</span><span class="dot">·</span></div>
<div class="hx off2" style="left:8.5px;top:45px">0030</div>
<div class="hx" style="left:55.5px;top:45px">00 00 64 da 00 00 00 00  00 00 <span class="w">10</span> <span class="w">11</span> <span class="w">12</span> <span class="w">13</span> <span class="w">14</span> <span class="w">15</span></div>
<div class="hx" style="left:453.3px;top:45px"><span class="dot">·</span><span class="dot">·</span>d<span class="dot">·</span><span class="dot">·</span><span class="dot">·</span><span class="dot">·</span><span class="dot">·</span> <span class="dot">·</span><span class="dot">·</span><span class="w">·</span><span class="w">·</span><span class="w">·</span><span class="w">·</span><span class="w">·</span><span class="w">·</span></div>
<div class="hx off2" style="left:8.5px;top:60px">0040</div>
<div class="hx" style="left:55.5px;top:60px"><span class="w">16</span> <span class="w">17</span> <span class="w">18</span> <span class="w">19</span> <span class="w">1a</span> <span class="w">1b</span> <span class="w">1c</span> <span class="w">1d</span>  <span class="w">1e</span> <span class="w">1f</span> <span class="w">20</span> <span class="w">21</span> <span class="w">22</span> <span class="w">23</span> <span class="w">24</span> <span class="w">25</span></div>
<div class="hx" style="left:453.3px;top:60px"><span class="w">·</span><span class="w">·</span><span class="w">·</span><span class="w">·</span><span class="w">·</span><span class="w">·</span><span class="w">·</span><span class="w">·</span> <span class="w">·</span><span class="w">·</span><span class="w"> </span><span class="w">!</span><span class="w">&quot;</span><span class="w">#</span><span class="w">$</span><span class="w">%</span></div>
<div class="hx off2" style="left:8.5px;top:75px">0050</div>
<div class="hx" style="left:55.5px;top:75px"><span class="w">26</span> <span class="w">27</span> <span class="w">28</span> <span class="w">29</span> <span class="w">2a</span> <span class="w">2b</span> <span class="w">2c</span> <span class="w">2d</span>  <span class="w">2e</span> <span class="w">2f</span> <span class="w">30</span> <span class="w">31</span> <span class="w">32</span> <span class="w">33</span> <span class="w">34</span> <span class="w">35</span></div>
<div class="hx" style="left:453.3px;top:75px"><span class="w">&amp;</span><span class="w">&#x27;</span><span class="w">(</span><span class="w">)</span><span class="w">*</span><span class="w">+</span><span class="w">,</span><span class="w">-</span> <span class="w">.</span><span class="w">/</span><span class="w">0</span><span class="w">1</span><span class="w">2</span><span class="w">3</span><span class="w">4</span><span class="w">5</span></div>
<div class="hx off2" style="left:8.5px;top:90px">0060</div>
<div class="hx" style="left:55.5px;top:90px"><span class="w">36</span> <span class="w">37</span></div>
<div class="hx" style="left:453.3px;top:90px"><span class="w">6</span><span class="w">7</span></div>
</div>
<div id="redbox" class="a"></div>

<div id="status" class="a">
 <svg class="a" style="left:0;top:0" width="60" height="21">
  <defs><linearGradient id="gled" x1="0" y1="0" x2="0" y2="1"><stop offset="0" stop-color="#e9e88c"/><stop offset="1" stop-color="#dcdb4a"/></linearGradient></defs>
  <circle cx="16.9" cy="9" r="6.6" fill="url(#gled)" stroke="#6f6f2c" stroke-width="0.9"/>
  <rect x="33.8" y="2.3" width="10.6" height="13.2" fill="#f3f3ec" stroke="#c4c4c0" stroke-width="0.6"/>
  <path d="M34,2.3 H41.8 V5.7 H34 Z" fill="#2f9ce0"/>
  <path d="M36.5,5.7 C36.8,4.5 37.6,3.6 38.6,3.1 C38.3,4 38.3,4.8 38.7,5.7 Z" fill="#fff"/>
  <rect x="35" y="8" width="2" height="0.8" fill="#bbb"/><rect x="35" y="13" width="6" height="0.8" fill="#bbb"/>
  <path d="M38.6,12 L45.2,3.2 L47.2,4.7 L40.6,13.5 Z" fill="#3a3a3a"/>
  <path d="M38.6,12 L40.6,13.5 L37.6,11.8 Z" fill="#000"/>
  <path d="M37.2,11.5 L38.6,12 L40.6,13.5 L37.4,12.6 Z" fill="#111"/>
 </svg>
 <div class="st" style="left:64px">wireshark_enx607d09265366MOM6H3.pcapng</div>
 <div class="sdots" style="left:878px"></div>
 <div class="st" style="left:892px;font-size:13px">Packets: 1010 · Dropped: 0 (0.0%)</div>
 <div class="sdots" style="left:1256px"></div>
 <div class="st" style="left:1270px;font-size:13.8px">Profile: Default</div>
</div>

</body></html>
